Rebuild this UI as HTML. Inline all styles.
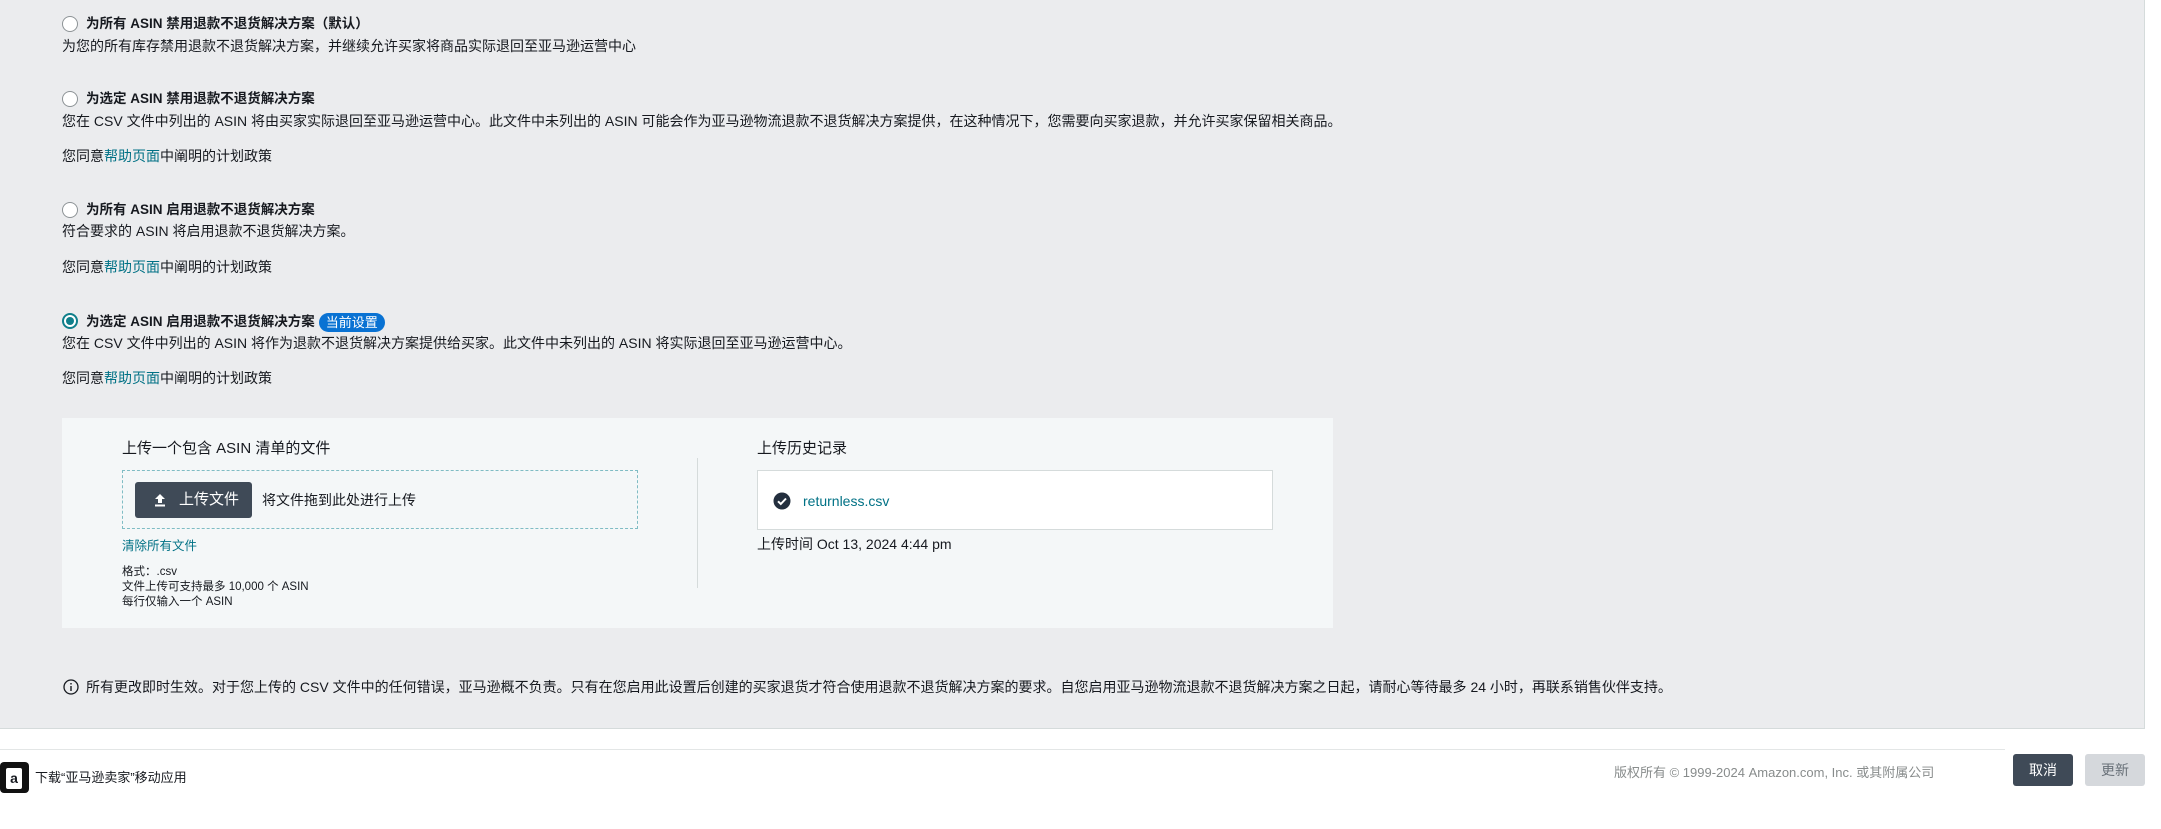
<!DOCTYPE html>
<html><head><meta charset="utf-8"><style>
*{margin:0;padding:0;box-sizing:border-box}
body{width:2161px;height:829px;background:#fff;font-family:"Liberation Sans","Noto Sans CJK SC",sans-serif;font-size:14px;color:#16191f;position:relative;overflow:hidden}
.bg{position:absolute;left:0;top:0;width:2145px;height:729px;background:#ebecee;border-right:1px solid #d5dbdb;border-bottom:1px solid #d5dbdb}
.a{position:absolute;white-space:nowrap;line-height:16px}
.t{font-weight:bold;font-size:13.5px}
.radio{position:absolute;width:16px;height:16px;border:1px solid #8d9396;border-radius:50%;background:#fff}
.radio.on{border:2px solid #0f7f8b}
.radio.on:after{content:"";position:absolute;left:2px;top:2px;width:8px;height:8px;border-radius:50%;background:#0f7f8b}
.lk{color:#007185}
.badge{display:inline-block;background:#0972d3;color:#fff;border-radius:10px;padding:0 7px;font-size:13px;line-height:19px;font-weight:normal;margin-left:4px;vertical-align:middle}
</style></head><body>
<div class="bg"></div>

<div class="radio" style="left:62px;top:16px"></div>
<div class="a t" style="left:86px;top:16px">为所有 ASIN 禁用退款不退货解决方案（默认）</div>
<div class="a" style="left:62px;top:38px">为您的所有库存禁用退款不退货解决方案，并继续允许买家将商品实际退回至亚马逊运营中心</div>

<div class="radio" style="left:62px;top:91px"></div>
<div class="a t" style="left:86px;top:91px">为选定 ASIN 禁用退款不退货解决方案</div>
<div class="a" style="left:62px;top:113px">您在 CSV 文件中列出的 ASIN 将由买家实际退回至亚马逊运营中心。此文件中未列出的 ASIN 可能会作为亚马逊物流退款不退货解决方案提供，在这种情况下，您需要向买家退款，并允许买家保留相关商品。</div>
<div class="a" style="left:62px;top:148px">您同意<span class="lk">帮助页面</span>中阐明的计划政策</div>

<div class="radio" style="left:62px;top:202px"></div>
<div class="a t" style="left:86px;top:202px">为所有 ASIN 启用退款不退货解决方案</div>
<div class="a" style="left:62px;top:223px">符合要求的 ASIN 将启用退款不退货解决方案。</div>
<div class="a" style="left:62px;top:259px">您同意<span class="lk">帮助页面</span>中阐明的计划政策</div>

<div class="radio on" style="left:62px;top:313px"></div>
<div class="a t" style="left:86px;top:313px">为选定 ASIN 启用退款不退货解决方案<span class="badge">当前设置</span></div>
<div class="a" style="left:62px;top:335px">您在 CSV 文件中列出的 ASIN 将作为退款不退货解决方案提供给买家。此文件中未列出的 ASIN 将实际退回至亚马逊运营中心。</div>
<div class="a" style="left:62px;top:370px">您同意<span class="lk">帮助页面</span>中阐明的计划政策</div>

<div style="position:absolute;left:62px;top:418px;width:1271px;height:210px;background:#f4f7f8"></div>
<div class="a" style="left:122px;top:441px;font-size:15px">上传一个包含 ASIN 清单的文件</div>
<div style="position:absolute;left:122px;top:470px;width:516px;height:59px;border:1px dashed #7fbcc4"></div>
<div style="position:absolute;left:135px;top:482px;width:117px;height:36px;background:#3f4a57;border-radius:3px;color:#fff;font-size:15px;line-height:36px">
<svg style="position:absolute;left:18px;top:11px" width="14" height="14" viewBox="0 0 14 14"><path d="M7 1L2 6h3v4h4V6h3z" fill="#fff"/><rect x="2" y="11.5" width="10" height="2" fill="#fff"/></svg>
<span style="position:absolute;left:44px">上传文件</span></div>
<div class="a" style="left:262px;top:492px">将文件拖到此处进行上传</div>
<div class="a lk" style="left:122px;top:538px;font-size:12.5px">清除所有文件</div>
<div class="a" style="left:122px;top:565px;font-size:11.5px;line-height:15px">格式：.csv<br>文件上传可支持最多 10,000 个 ASIN<br>每行仅输入一个 ASIN</div>
<div style="position:absolute;left:697px;top:458px;width:1px;height:130px;background:#d5dbdb"></div>
<div class="a" style="left:757px;top:441px;font-size:15px">上传历史记录</div>
<div style="position:absolute;left:757px;top:470px;width:516px;height:60px;background:#fff;border:1px solid #d5dbdb"></div>
<svg style="position:absolute;left:773px;top:492px" width="18" height="18" viewBox="0 0 18 18"><circle cx="9" cy="9" r="8.5" fill="#232f3e"/><path d="M5 9.3l2.8 2.7L13 6.5" stroke="#fff" stroke-width="2" fill="none"/></svg>
<div class="a lk" style="left:803px;top:493px;font-size:14px">returnless.csv</div>
<div class="a" style="left:757px;top:536px">上传时间 Oct 13, 2024 4:44 pm</div>

<svg style="position:absolute;left:63px;top:679px" width="16" height="16" viewBox="0 0 16 16"><circle cx="8" cy="8" r="7" fill="none" stroke="#16191f" stroke-width="1.3"/><rect x="7.3" y="7" width="1.4" height="5" fill="#16191f"/><rect x="7.3" y="4" width="1.4" height="1.5" fill="#16191f"/></svg>
<div class="a" style="left:86px;top:679px">所有更改即时生效。对于您上传的 CSV 文件中的任何错误，亚马逊概不负责。只有在您启用此设置后创建的买家退货才符合使用退款不退货解决方案的要求。自您启用亚马逊物流退款不退货解决方案之日起，请耐心等待最多 24 小时，再联系销售伙伴支持。</div>

<div style="position:absolute;left:0;top:749px;width:2005px;height:1px;background:#e3e6e6"></div>
<div style="position:absolute;left:0;top:762px;width:29px;height:31px;background:#111;border-radius:4px"><div style="position:absolute;left:6px;top:6px;width:16px;height:21px;background:#fff;border-radius:2px;font-size:14px;font-weight:bold;text-align:center;line-height:20px">a</div></div>
<div class="a" style="left:35px;top:770px;font-size:13px">下载“亚马逊卖家”移动应用</div>
<div class="a" style="left:1614px;top:765px;color:#888c8c;font-size:13px">版权所有 © 1999-2024 Amazon.com, Inc. 或其附属公司</div>
<div style="position:absolute;left:2013px;top:754px;width:60px;height:32px;background:#3f4a57;border-radius:3px;color:#fff;text-align:center;line-height:32px">取消</div>
<div style="position:absolute;left:2085px;top:754px;width:60px;height:32px;background:#d5d8dc;border-radius:3px;color:#687078;text-align:center;line-height:32px">更新</div>
</body></html>
